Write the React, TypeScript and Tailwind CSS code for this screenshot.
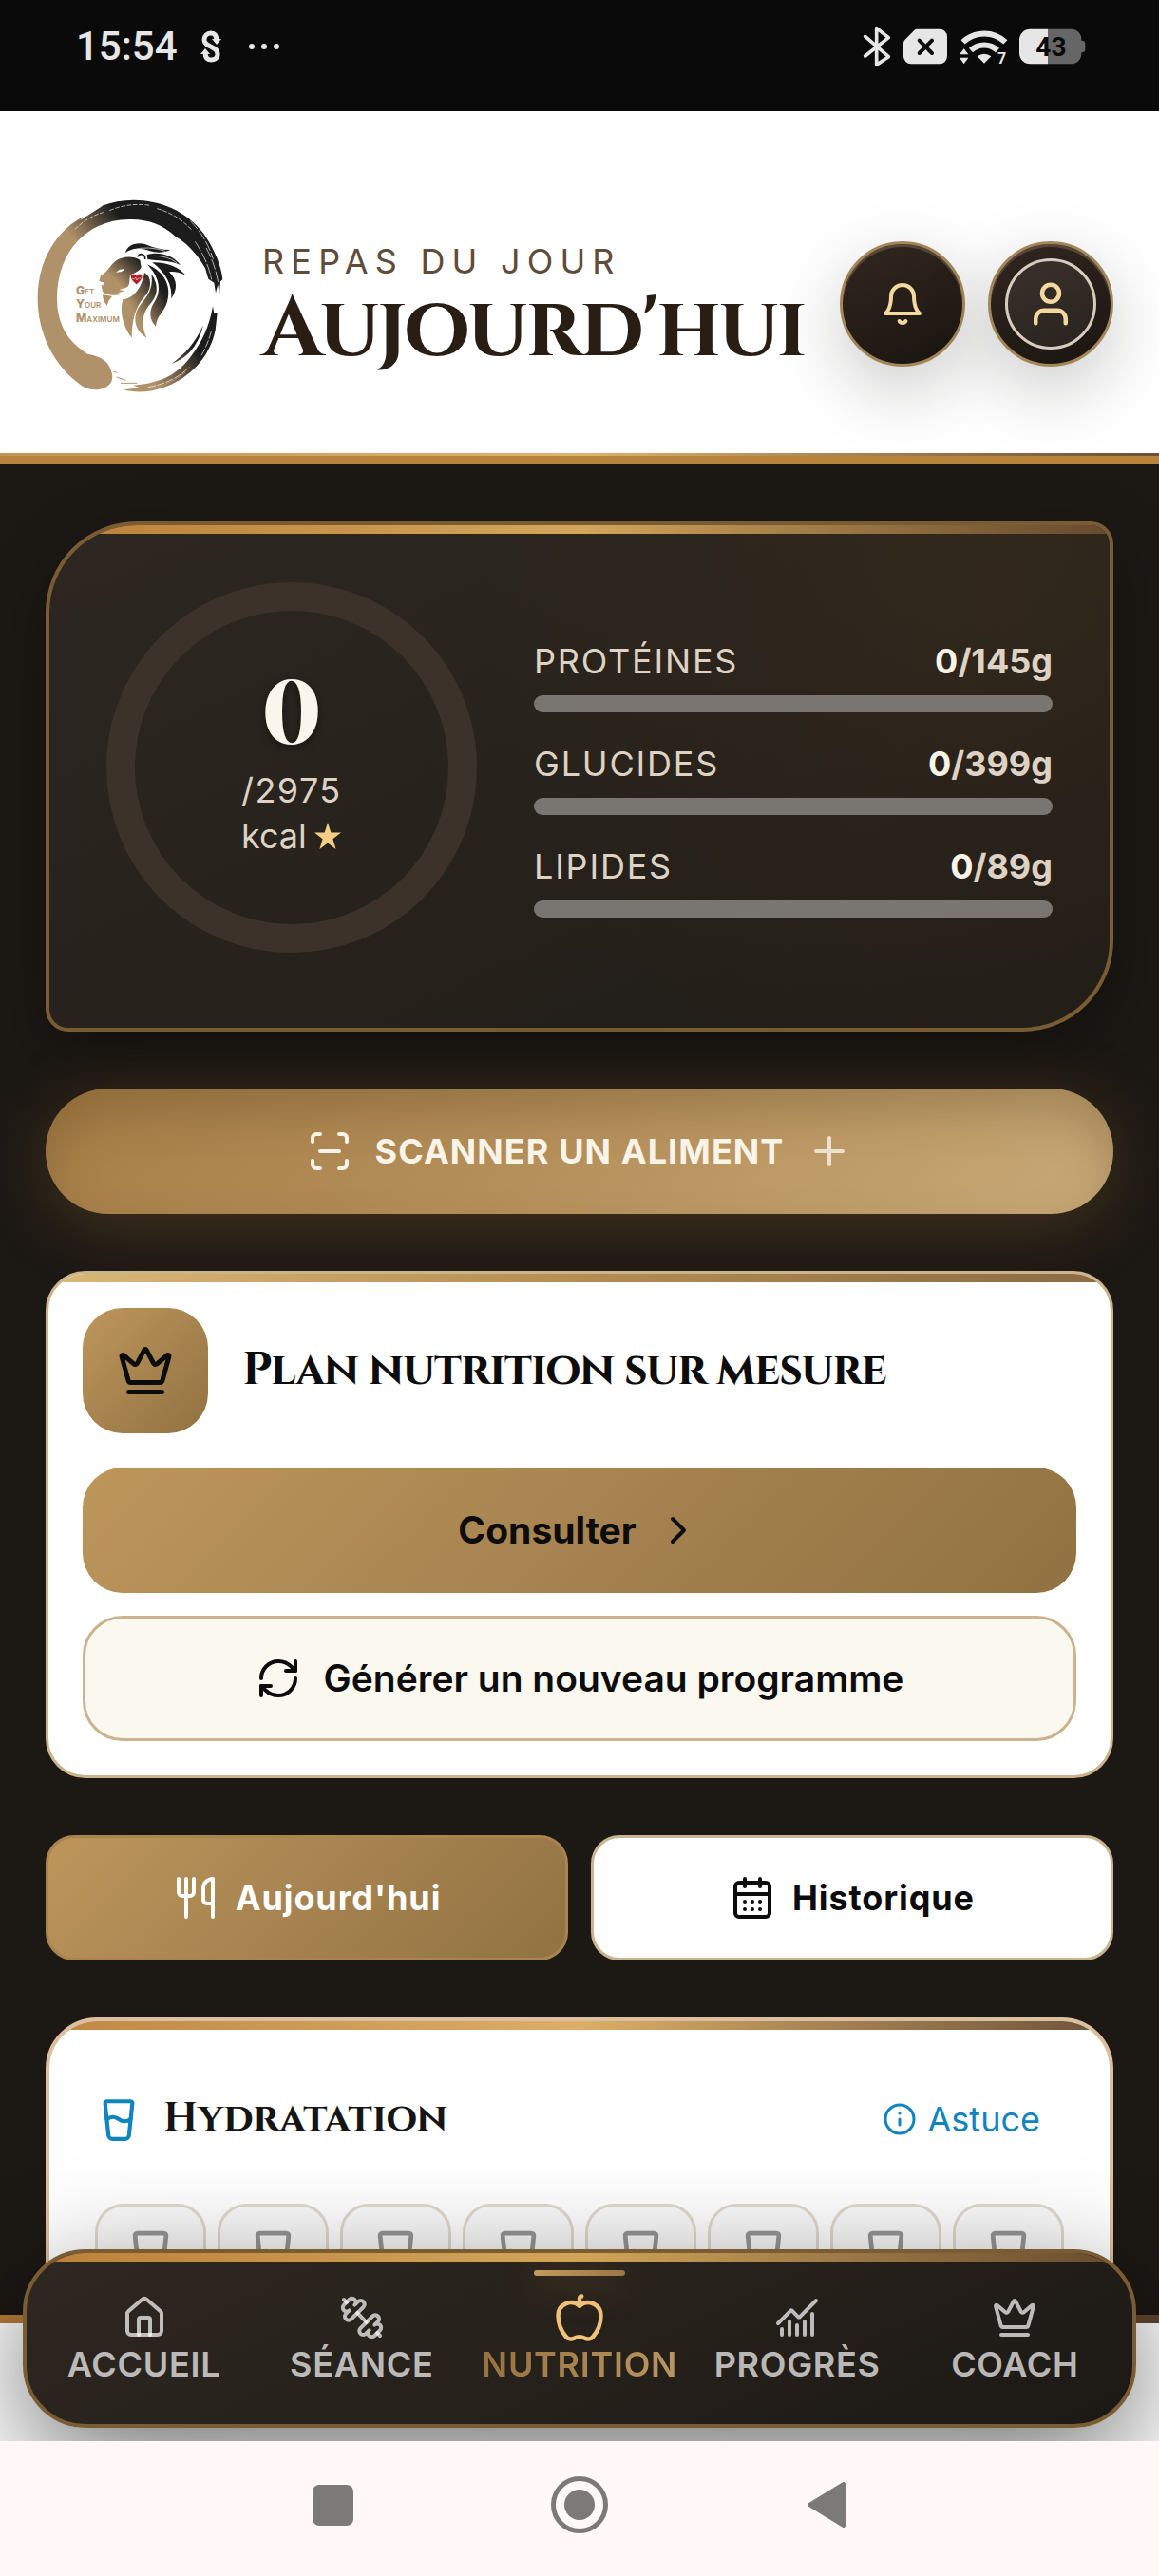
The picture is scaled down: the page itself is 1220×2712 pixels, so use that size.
import type { ReactNode } from 'react';
import {
  Apple,
  CalendarDays,
  ChartNoAxesCombined,
  ChevronRight,
  Crown,
  GlassWater,
  House,
  Info,
  Plus,
  RefreshCw,
  ScanLine,
  User,
  Utensils,
} from 'lucide-react';

const MACROS = [
  { label: 'Protéines', value: 0, goal: 145 },
  { label: 'Glucides', value: 0, goal: 399 },
  { label: 'Lipides', value: 0, goal: 89 },
];

const NAV = [
  { label: 'Accueil', icon: House },
  { label: 'Séance', icon: DumbbellIcon },
  { label: 'Nutrition', icon: Apple, active: true },
  { label: 'Progrès', icon: ChartNoAxesCombined },
  { label: 'Coach', icon: Crown },
];

const GLASSES = 8;

const DISPLAY = "font-['Cinzel','Liberation_Serif',serif] font-bold";

function StatusBar() {
  return (
    <div className="flex h-[117px] shrink-0 items-center justify-between bg-[#0a0a0a] pb-5 pl-20 pr-[77px] text-[#e6e6e6]">
      <div className="flex items-center gap-6">
        <span className="font-['Roboto',sans-serif] text-[42px] font-medium leading-none">15:54</span>
        <svg width="22" height="36" viewBox="0 0 22 36" fill="none" stroke="currentColor" strokeWidth="5">
          <path d="M17 12C17 7 15 4 11 4S4 7 4 11C4 19 18 17 18 26c0 4-3 6-7 6s-6-3-6-8" />
          <path d="M12 10h10l-5 6zM0 26h10l-5-6z" fill="currentColor" stroke="none" />
        </svg>
        <svg width="34" height="8" viewBox="0 0 34 8" fill="currentColor" className="ml-1">
          <circle cx="4" cy="4" r="3" />
          <circle cx="17" cy="4" r="3" />
          <circle cx="30" cy="4" r="3" />
        </svg>
      </div>
      <div className="flex items-center gap-[13px]">
        <svg width="30" height="44" viewBox="0 0 90 132" fill="none" stroke="currentColor" strokeWidth="11" strokeLinejoin="round" strokeLinecap="round">
          <path d="M8 34 82 98 44 124V8L82 38 8 96" />
        </svg>
        <svg width="46" height="38" viewBox="0 0 138 114" fill="currentColor">
          <path d="M42 2H114a24 24 0 0 1 24 24v62a24 24 0 0 1-24 24H24A24 24 0 0 1 0 88V46Q0 40 5 35L34 6Q38 2 42 2Z" />
          <path d="m50 38 40 40m0-40L50 78" stroke="#0a0a0a" strokeWidth="12" strokeLinecap="round" />
        </svg>
        <svg width="50" height="38" viewBox="0 0 150 114" fill="none" stroke="currentColor" strokeWidth="18" className="overflow-visible">
          <path d="M11 43A97 97 0 0 1 145 43" />
          <path d="M36 69A62 62 0 0 1 120 69" />
          <path d="M56 88a34 34 0 0 1 44 0l-22 22z" fill="currentColor" stroke="none" />
          <path d="M14 64 28 82H0zM0 92h28l-14 20z" fill="currentColor" stroke="none" />
          <text x="120" y="112" fill="currentColor" stroke="none" className="font-['Roboto',sans-serif] text-[48px] font-bold">
            7
          </text>
        </svg>
        <svg width="70" height="38" viewBox="0 0 210 114">
          <path d="M90 2h74a32 32 0 0 1 32 32v4h2a10 10 0 0 1 10 10v18a10 10 0 0 1-10 10h-2v4a32 32 0 0 1-32 32H90z" fill="#666" />
          <path d="M90 2H34A34 34 0 0 0 0 36v42a34 34 0 0 0 34 34h56z" fill="currentColor" />
          <text x="52" y="86" fill="#0a0a0a" className="font-['Roboto',sans-serif] text-[84px] font-bold">
            43
          </text>
        </svg>
      </div>
    </div>
  );
}

function Logo() {
  return (
    <svg viewBox="0 0 636 714" className="w-[212px] shrink-0" role="img" aria-label="Get Your Maximum">
      <defs>
        <linearGradient id="brush" gradientUnits="userSpaceOnUse" x1="150" y1="170" x2="275" y2="70">
          <stop offset="0" stopColor="#b0926a" />
          <stop offset="1" stopColor="#1c1c1c" />
        </linearGradient>
        <linearGradient id="tail" gradientUnits="userSpaceOnUse" x1="400" y1="620" x2="530" y2="510">
          <stop offset="0" stopColor="#b0926a" />
          <stop offset="1" stopColor="#1c1c1c" />
        </linearGradient>
        <linearGradient id="face" gradientUnits="userSpaceOnUse" x1="275" y1="290" x2="345" y2="215">
          <stop offset="0" stopColor="#b0926a" />
          <stop offset="1" stopColor="#1c1c1c" />
        </linearGradient>
        <linearGradient id="mane" gradientUnits="userSpaceOnUse" x1="320" y1="370" x2="415" y2="310">
          <stop offset="0" stopColor="#b0926a" />
          <stop offset="1" stopColor="#1c1c1c" />
        </linearGradient>
      </defs>
      <path
        fill="url(#brush)"
        d="M252 560C266 590 258 614 230 623C200 634 170 624 150 606C75 550 23 450 23 340C23 240 62 160 128 106L165 82L158 92L240 40L225 48C330 6 470 34 545 132C588 192 605 250 607 280L600 286L597 326L592 296L585 322L580 290L562 278L552 244C532 208 500 168 458 144C418 106 370 88 310 90C180 92 84 190 84 340C84 410 110 460 150 493L180 515C225 522 245 540 252 560Z"
      />
      <g fill="none" stroke="#fff" strokeWidth="2">
        <path d="M250 62q60-26 130-16M400 56q64 18 108 66M140 122q40-40 90-54" strokeDasharray="14 5" />
        <path d="M505 95q50 50 72 120M520 160q40 60 52 120M555 180q28 50 38 110" strokeDasharray="34 6" />
      </g>
      <path
        fill="url(#tail)"
        d="M576 364L580 388L590 386L584 440C565 530 500 590 430 617C380 637 330 638 295 628L345 622L325 614L370 608L400 600C440 590 480 560 505 525C540 480 565 430 576 364Z"
      />
      <path fill="url(#tail)" d="M445 546C490 515 520 480 546 424C532 482 500 528 445 546Z" />
      <path d="M272 588l30 10M285 607h52M262 570l12 4M340 626q90 0 150-54" fill="none" stroke="#b0926a" strokeWidth="3" />
      <path d="M372 620q80-14 130-64M540 520q22-40 32-80" fill="none" stroke="#fff" strokeWidth="2" strokeDasharray="24 5" />

      <path
        fill="url(#face)"
        d="M346 218C322 203 290 206 268 222C250 238 242 256 222 268L217 284L234 292L224 298L228 318C242 330 262 332 290 326L276 322L298 316L280 312L300 306C316 300 312 286 314 272C322 258 344 258 350 240Z"
      />
      <path fill="#fff" d="M270 257q14-13 29-9q-12 10-29 9M218 288l14 1l-4 10z" />
      <path fill="#b0926a" d="M228 328l30 4q-12 14-16 30q-14-14-14-34" />
      <g fill="#1c1c1c">
        <path d="M300 196C304 172 332 160 362 168C390 180 415 186 442 186C420 197 396 195 378 190C350 178 318 180 300 196Z" />
        <path d="M368 202C402 190 450 202 474 234C440 218 400 222 370 216Z" />
        <path d="M385 226C430 224 470 242 490 266C468 256 452 254 438 256C466 282 464 312 445 340C448 300 430 260 385 226Z" />
      </g>
      <path d="M322 186q50-14 104 4M390 205q44 0 72 22" fill="none" stroke="#fff" strokeWidth="2" />
      <path d="M338 208c8-14 26-8 24 8" fill="none" stroke="#1c1c1c" strokeWidth="5" />
      <g fill="url(#mane)">
        <path d="M368 232C424 254 446 302 432 350C422 385 398 392 396 428C374 405 374 376 392 350C416 315 406 268 368 232Z" />
        <path d="M360 258C384 270 384 308 362 332C332 364 320 410 320 464C294 430 280 384 292 342C322 342 352 308 360 258Z" />
        <path d="M382 262C408 300 402 334 374 362C350 390 352 430 367 464C340 448 324 420 334 385C346 348 392 330 382 262Z" />
      </g>
      <path
        d="M335 296C320 284 315 276 317 268C320 260 331 260 335 268C339 260 350 260 353 268C355 276 350 284 335 296Z"
        fill="#b01f28"
        stroke="#fff"
        strokeWidth="2"
      />
      <path d="M320 278h9l3-5l4 9l4-6h10" fill="none" stroke="#fff" strokeWidth="1.5" />
      <g fill="#b0926a" className="font-['Inter',sans-serif] text-[24px] font-semibold">
        <text x="144" y="326"><tspan className="text-[36px] font-extrabold">G</tspan>ET</text>
        <text x="144" y="369"><tspan className="text-[36px] font-extrabold">Y</tspan>OUR</text>
        <text x="144" y="413"><tspan className="text-[36px] font-extrabold">M</tspan>AXIMUM</text>
      </g>
    </svg>
  );
}

function BellIcon() {
  return (
    <svg width="48" height="48" viewBox="0 0 24 24" fill="none" stroke="currentColor" strokeWidth="2" strokeLinecap="round" strokeLinejoin="round">
      <path d="M6 8a6 6 0 0 1 12 0c0 7 3 9 3 9H3s3-2 3-9" />
      <path d="M10.3 21a1.94 1.94 0 0 0 3.4 0" />
    </svg>
  );
}

function DumbbellIcon({ size, className }: { size?: number; className?: string }) {
  return (
    <svg width={size} height={size} className={className} viewBox="0 0 24 24" fill="none" stroke="currentColor" strokeWidth="2" strokeLinecap="round" strokeLinejoin="round">
      <path d="M14.4 14.4 9.6 9.6" />
      <path d="M18.657 21.485a2 2 0 1 1-2.829-2.828l-1.767 1.768a2 2 0 1 1-2.829-2.829l6.364-6.364a2 2 0 1 1 2.829 2.829l-1.768 1.767a2 2 0 1 1 2.828 2.829z" />
      <path d="m21.5 21.5-1.4-1.4" />
      <path d="M3.9 3.9 2.5 2.5" />
      <path d="M6.404 12.768a2 2 0 1 1-2.829-2.829l1.768-1.767a2 2 0 1 1-2.828-2.829l2.828-2.828a2 2 0 1 1 2.829 2.828l1.767-1.768a2 2 0 1 1 2.829 2.829z" />
    </svg>
  );
}

function RoundButton({ label, children }: { label: string; children: ReactNode }) {
  return (
    <button
      aria-label={label}
      className="flex size-[132px] items-center justify-center rounded-full border-3 border-[#a2865a] bg-linear-160 from-[#33261f] to-[#1a1511] text-[#f3d9a0] shadow-[0_24px_72px_rgba(20,20,15,0.22),inset_0_3px_0_rgba(255,235,190,0.18)]"
    >
      {children}
    </button>
  );
}

function Header() {
  return (
    <header className="relative flex shrink-0 items-center bg-white pb-[38px] pl-8 pr-12 pt-[84px]">
      <Logo />
      <div className="ml-8 flex-1">
        <p className="text-[36px] leading-[54px] tracking-[0.2em] text-[#5f4c3a]">REPAS DU JOUR</p>
        <h1 className={`${DISPLAY} whitespace-nowrap text-[90px] leading-[90px] tracking-tight text-[#291e14]`}>Aujourd'hui</h1>
      </div>
      <div className="flex gap-6">
        <RoundButton label="Notifications">
          <BellIcon />
        </RoundButton>
        <RoundButton label="Profil">
          <span className="flex size-24 items-center justify-center rounded-full border-3 border-[#d8ccbe] bg-linear-160 from-[#3b302b] to-[#28241e]">
            <User size={54} />
          </span>
        </RoundButton>
      </div>
    </header>
  );
}

function CalorieRing({ eaten, goal }: { eaten: number; goal: number }) {
  return (
    <div className="flex size-[390px] shrink-0 flex-col items-center justify-center rounded-full border-30 border-[#3d322a]">
      <strong className="mb-8 font-['Playfair_Display','Liberation_Serif',serif] text-[93px] font-black lining-nums leading-[64px] text-[#faf6ec] [text-shadow:0_3px_9px_rgba(0,0,0,0.5)]">
        {eaten}
      </strong>
      <p className="w-[106px] text-[36px] leading-[48px] text-[#ddd2c3]">
        <span className="tracking-[0.04em]">/{goal}</span>
        <span className="flex items-center gap-2">
          kcal
          <svg width="28" height="28" viewBox="0 0 28 28" className="shrink-0 fill-[#f3cf85]">
            <path d="M14 0l3.400 10.600H28l-8.600 6.600L22.600 28 14 21.400 5.400 28l3.200-10.800L0 10.600h10.600z" />
          </svg>
        </span>
      </p>
    </div>
  );
}

function SummaryCard() {
  return (
    <section className="shrink-0 overflow-hidden rounded-[24px] rounded-br-[96px] rounded-tl-[96px] border-4 border-[#7a5c34] bg-[radial-gradient(circle_at_90%_15%,rgba(90,60,30,0.2),transparent_50%),linear-gradient(155deg,#2e2721,#28231d_40%,#201c17)] shadow-[0_24px_72px_rgba(0,0,0,0.3)]">
      <div className="h-[9px] bg-linear-to-r from-[#bd8038] via-[#d4a65a] to-[#664a2e]" />
      <div className="flex items-center gap-15 px-15 pb-[60px] pt-[51px]">
        <div className="pb-[19px]">
          <CalorieRing eaten={0} goal={2975} />
        </div>
        <div className="flex flex-1 flex-col gap-[27px]">
          {MACROS.map((macro) => (
            <div key={macro.label} className="flex flex-col gap-[9px]">
              <div className="flex justify-between text-[36px] leading-[54px] text-[#ddd2c3]">
                <span className="uppercase tracking-[0.05em]">{macro.label}</span>
                <span className="font-bold">
                  <span className="text-[#fbf4e8]">{macro.value}</span>/{macro.goal}g
                </span>
              </div>
              <div className="h-[18px] overflow-hidden rounded-full bg-[#797570]">
                <div className="h-full bg-[#d9a75a]" style={{ width: `${(macro.value / macro.goal) * 100}%` }} />
              </div>
            </div>
          ))}
        </div>
      </div>
    </section>
  );
}

function PlanCard() {
  return (
    <section className="shrink-0 overflow-hidden rounded-[42px] border-3 border-[#cbb48c] bg-white text-[#0c0c0c]">
      <div className="h-[9px] bg-linear-to-r from-[#dbb877] via-[#b58c52] to-[#8a6b43]" />
      <div className="flex flex-col gap-6 px-9 pb-9 pt-[27px]">
        <div className="mb-3 flex items-center gap-9">
          <span className="flex size-[132px] items-center justify-center rounded-[42px] bg-linear-135 from-[#bd965b] to-[#927242]">
            <Crown size={60} />
          </span>
          <h2 className={`${DISPLAY} text-[48px] leading-[66px] tracking-tight`}>Plan nutrition sur mesure</h2>
        </div>
        <button className="flex h-[132px] items-center justify-center gap-5 rounded-[42px] bg-linear-135 from-[#bd965b] via-[#a68350] to-[#927242] text-[39px] font-bold">
          Consulter
          <ChevronRight size={48} />
        </button>
        <button className="flex h-[132px] items-center justify-center gap-6 rounded-[42px] border-3 border-[#c9b48f] bg-[#fbf8f0] text-[39px] font-semibold">
          <RefreshCw size={48} />
          Générer un nouveau programme
        </button>
      </div>
    </section>
  );
}

function Tabs() {
  return (
    <div className="grid shrink-0 grid-cols-2 gap-6 text-[36px] font-bold tracking-wide">
      <button className="flex h-[132px] items-center justify-center gap-[18px] rounded-[30px] border-3 border-[#a9844e] bg-linear-135 from-[#bd965b] via-[#a68350] to-[#927242] bg-origin-border text-white">
        <Utensils size={48} />
        Aujourd'hui
      </button>
      <button className="flex h-[132px] items-center justify-center gap-[18px] rounded-[30px] border-3 border-[#c9b48f] bg-white text-[#0c0c0c]">
        <CalendarDays size={48} />
        Historique
      </button>
    </div>
  );
}

function HydrationCard() {
  return (
    <section className="shrink-0 overflow-hidden rounded-[54px] border-4 border-[#dcbf9f] bg-white">
      <div className="h-[9px] bg-linear-to-r from-[#c08843] via-[#dcae66] to-[#6d543b]" />
      <div className="px-12 pb-24 pt-[58px]">
        <div className="flex items-center justify-between pr-[25px]">
          <h2 className="flex items-center gap-[22px]">
            <GlassWater size={50} className="text-[#0f84bf]" />
            <span className={`${DISPLAY} text-[42px] leading-[72px] text-[#151515]`}>Hydratation</span>
          </h2>
          <button className="flex items-center gap-3 text-[36px] text-[#0f84bf]">
            <Info size={36} />
            Astuce
          </button>
        </div>
        <div className="mt-[53px] grid grid-cols-8 gap-3">
          {Array.from({ length: GLASSES }, (_, i) => (
            <button
              key={i}
              aria-label={`Verre ${i + 1}`}
              className="flex h-[132px] justify-center rounded-[30px] border-3 border-[#dfd9cd] bg-[#fafafa] pt-[21px] text-[#969696]"
            >
              <GlassWater size={57} />
            </button>
          ))}
        </div>
      </div>
    </section>
  );
}

function BottomNav() {
  return (
    <nav className="absolute inset-x-6 bottom-[14px] h-[188px] overflow-hidden rounded-[66px] border-4 border-[#7a5c34] bg-linear-155 from-[#2f2721] via-[#26211b] to-[#1c1814]">
      <div className="h-[9px] bg-linear-to-r from-[#bd8038] via-[#d4a65a] to-[#664a2e]" />
      <div className="mx-[9px] grid grid-cols-5">
        {NAV.map(({ label, icon: Icon, active }) => (
          <a
            key={label}
            href={`#${label.toLowerCase()}`}
            className={`relative flex flex-col items-center gap-[7px] pt-[35px] ${active ? 'text-[#f0c27c]' : 'text-[rgba(255,255,255,0.7)]'}`}
          >
            {active && (
              <span className="absolute top-[9px] h-[6px] w-24 rounded-full bg-linear-to-r from-[#c29a5b] to-[#9a7645] shadow-[0_6px_36px_rgba(184,132,60,0.5)]" />
            )}
            <span className="flex size-12 items-center justify-center">
              <Icon size={active ? 54 : 48} className="shrink-0" />
            </span>
            <span
              className={`text-[36px] font-semibold uppercase leading-none tracking-[0.02em] ${active ? 'bg-linear-to-r from-[#97723f] to-[#b99661] bg-clip-text text-transparent' : ''}`}
            >
              {label}
            </span>
          </a>
        ))}
      </div>
    </nav>
  );
}

function SystemNav() {
  return (
    <div className="relative flex h-[142px] shrink-0 items-center justify-center gap-[200px] bg-[#fff8f6] pb-2 text-[#7b7a77]">
      <button aria-label="Applications récentes" className="flex size-15 items-center justify-center">
        <span className="size-[43px] rounded-[7px] bg-current" />
      </button>
      <button aria-label="Écran d'accueil" className="flex size-15 items-center justify-center rounded-full border-5 border-current">
        <span className="size-8 rounded-full bg-current" />
      </button>
      <button aria-label="Retour" className="flex size-15 items-center justify-center">
        <svg width="42" height="50" viewBox="0 0 42 50" fill="currentColor" stroke="currentColor" strokeWidth="4" strokeLinejoin="round">
          <path d="M39 3v44L3 25z" />
        </svg>
      </button>
    </div>
  );
}

export default function App() {
  return (
    <div className="flex h-screen flex-col bg-white font-['Inter',sans-serif]">
      <StatusBar />
      <div className="relative flex min-h-0 flex-1 flex-col overflow-hidden">
        <Header />
        <div className="h-[3px] shrink-0 bg-linear-to-r from-[#c4935a] via-[#dbb46f] to-[#6b5038]" />
        <div className="h-[9px] shrink-0 bg-[#b8843c]" />
        <main className="flex min-h-0 flex-1 flex-col gap-15 overflow-hidden bg-[#1c1814] px-12 pt-15">
          <SummaryCard />
          <button className="flex h-[132px] shrink-0 items-center justify-center gap-6 rounded-full bg-linear-135 from-[#a57c45] via-[#b6915c] to-[#c8a978] text-[36px] font-bold text-[#faf3e8] shadow-[0_12px_72px_rgba(184,132,60,0.26),inset_0_24px_48px_rgba(90,65,30,0.3)]">
            <ScanLine size={48} />
            <span className="tracking-[0.03em]">SCANNER UN ALIMENT</span>
            <Plus size={48} className="opacity-80" />
          </button>
          <PlanCard />
          <Tabs />
          <HydrationCard />
        </main>
        <div className="h-[9px] shrink-0 bg-linear-to-r from-[#b87c38] via-[#d4a65a] to-[#5f4630]" />
        <div className="h-[124px] shrink-0" />
        <div className="pointer-events-none absolute inset-x-6 bottom-[14px] h-[188px] rounded-[66px] shadow-[0_36px_120px_rgba(0,0,0,0.55)]" />
        <BottomNav />
      </div>
      <SystemNav />
    </div>
  );
}
